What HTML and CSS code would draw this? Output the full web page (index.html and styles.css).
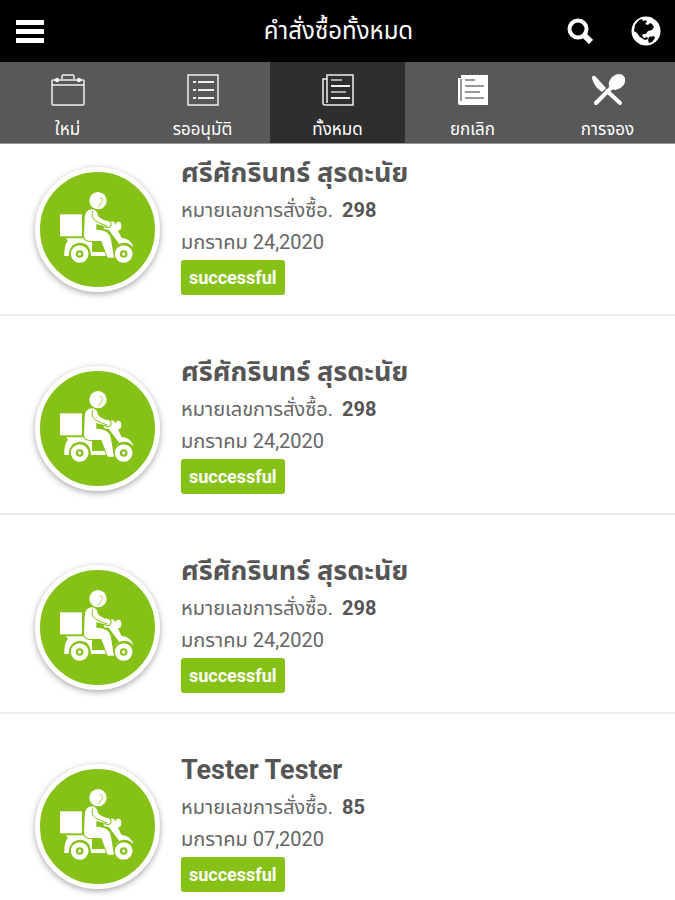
FILE: index.html
```html
<!DOCTYPE html>
<html lang="th">
<head>
    <meta charset="UTF-8">
    <meta name="viewport" content="width=device-width, initial-scale=1.0">
    <title>คำสั่งซื้อทั้งหมด</title>
    <link rel="stylesheet" href="styles.css">
</head>
<body>
    <!-- Shared icons -->
    <svg class="sprite" aria-hidden="true">
        <symbol id="scooter" viewBox="60 63 345 345">
            <circle cx="234" cy="149" r="26" fill="#fff"/>
            <path d="M238 140q10 0 10 8q0 8-7 10q0 8-8 11" fill="none" stroke="#86c117" stroke-width="2"/>
            <rect x="120" y="190" width="66" height="66" fill="#fff"/>
            <path d="M138 262H216V303H280Q284 287 298 279L266 236Q252 238 250 230Q262 226 272 213Q278 208 284 216L304 260Q332 262 341 290Q328 274 311 275Q281 278 278 315H213Q212 276 179 275Q148 278 146 315H133Q132 280 144 270Z" fill="#fff"/>
            <path d="M194 204q0-28 22-29q15 0 18 20q10 12 32 16q8 3 5 12q-1 6-8 5l-34-9v17q24 1 34 10q8 7 10 20l9 54h-19l-19-50h-34q-18 0-18-17z" fill="#fff" stroke="#86c117" stroke-width="6" paint-order="stroke"/>
            <path d="M218 181q-6 20 10 30q12 7 34 14" fill="none" stroke="#86c117" stroke-width="3"/>
            <ellipse cx="295" cy="225" rx="9" ry="13" fill="#fff"/>
            <circle cx="179" cy="309" r="19" fill="#86c117" stroke="#fff" stroke-width="15"/>
            <circle cx="311" cy="309" r="19" fill="#86c117" stroke="#fff" stroke-width="15"/>
            <circle cx="179" cy="309" r="5" fill="#fff"/>
            <circle cx="311" cy="309" r="5" fill="#fff"/>
            <path d="M149 309a30 30 0 0 1 60 0M281 309a30 30 0 0 1 56-14" fill="none" stroke="#86c117" stroke-width="3"/>
        </symbol>
    </svg>

    <header class="topbar">
        <button class="icon-btn" type="button" aria-label="เมนู">
            <svg width="28" height="26" viewBox="0 0 28 26" fill="#fff">
                <rect y="2" width="28" height="5"/>
                <rect y="11" width="28" height="5"/>
                <rect y="20" width="28" height="5"/>
            </svg>
        </button>
        <h1>คำสั่งซื้อทั้งหมด</h1>
        <div class="actions">
            <button class="icon-btn" type="button" aria-label="ค้นหา">
                <svg width="26" height="26" viewBox="0 0 26 26" fill="none" stroke="#fff">
                    <circle cx="11" cy="11" r="8.5" stroke-width="4"/>
                    <path d="M17 17l7 7" stroke-width="6"/>
                </svg>
            </button>
            <button class="icon-btn" type="button" aria-label="ภาษา">
                <svg width="30" height="30" viewBox="0 0 30 30">
                    <circle cx="15" cy="15" r="14.5" fill="#fff"/>
                    <path d="M4 9l4-5 3-1 1 2 3-1 1 2-2 2 3 1 2-2 2 1 2 3-2 3-4 1-2 3h-3l-1 2 2 2 3-1 1 2-3 1-5-3-3-4-3-2z" fill="#000"/>
                    <path d="M17 24l1-3 5-1 1 2-3 4-3 1z" fill="#000"/>
                </svg>
            </button>
        </div>
    </header>

    <nav class="tabs">
        <a href="#new">
            <svg viewBox="0 0 34 34" fill="none" stroke="#eee" stroke-width="1.5">
                <rect x="1" y="7" width="32" height="25" rx="1"/>
                <path d="M1 12h32M11 6V3q0-1 1-1h10q1 0 1 1v3"/>
                <circle cx="6" cy="7" r="1.5" fill="#fff"/>
                <circle cx="28" cy="7" r="1.5" fill="#fff"/>
            </svg>
            <span>ใหม่</span>
        </a>
        <a href="#pending">
            <svg viewBox="0 0 34 34" fill="none" stroke="#eee" stroke-width="1.5">
                <rect x="2" y="2" width="30" height="30"/>
                <path d="M12 9h16M12 17h16M12 25h16M7 9h3M7 17h3M7 25h3" stroke-width="2"/>
            </svg>
            <span>รออนุมัติ</span>
        </a>
        <a href="#all" class="active">
            <svg viewBox="0 0 34 34" fill="none" stroke="#eee" stroke-width="1.5">
                <path d="M6 2h26v30H4q-2 0-2-2V6h4zM6 6v24"/>
                <path d="M10 13h19M10 25h19" stroke-width="2"/>
                <path d="M10 7h11M10 19h15" stroke="#aaa" stroke-width="2"/>
            </svg>
            <span>ทั้งหมด</span>
        </a>
        <a href="#cancel">
            <svg viewBox="0 0 34 34">
                <path d="M5 2h27v30H4q-2 0-2-2V5h3z" fill="#fff"/>
                <path d="M5 6v22M9 7h10M9 13h19M9 19h15M9 25h19" stroke="#777" stroke-width="1.5"/>
            </svg>
            <span>ยกเลิก</span>
        </a>
        <a href="#booking">
            <svg viewBox="0 0 34 34" fill="#fff">
                <path d="M1 5q0-3 3-2l11 12-4 4q-8-5-10-14z"/>
                <ellipse cx="26" cy="9" rx="9" ry="7" transform="rotate(-40 26 9)"/>
                <path d="M21 14L5 30M16 18l13 12" stroke="#fff" stroke-width="4" stroke-linecap="round"/>
            </svg>
            <span>การจอง</span>
        </a>
    </nav>

    <main class="orders">
        <article class="order">
            <div class="avatar"><svg><use href="#scooter"/></svg></div>
            <div class="info">
                <h2>ศรีศักรินทร์ สุรดะนัย</h2>
                <p>หมายเลขการสั่งซื้อ. <b>298</b></p>
                <p>มกราคม 24,2020</p>
                <span class="status">successful</span>
            </div>
        </article>
        <article class="order">
            <div class="avatar"><svg><use href="#scooter"/></svg></div>
            <div class="info">
                <h2>ศรีศักรินทร์ สุรดะนัย</h2>
                <p>หมายเลขการสั่งซื้อ. <b>298</b></p>
                <p>มกราคม 24,2020</p>
                <span class="status">successful</span>
            </div>
        </article>
        <article class="order">
            <div class="avatar"><svg><use href="#scooter"/></svg></div>
            <div class="info">
                <h2>ศรีศักรินทร์ สุรดะนัย</h2>
                <p>หมายเลขการสั่งซื้อ. <b>298</b></p>
                <p>มกราคม 24,2020</p>
                <span class="status">successful</span>
            </div>
        </article>
        <article class="order">
            <div class="avatar"><svg><use href="#scooter"/></svg></div>
            <div class="info">
                <h2>Tester Tester</h2>
                <p>หมายเลขการสั่งซื้อ. <b>85</b></p>
                <p>มกราคม 07,2020</p>
                <span class="status">successful</span>
            </div>
        </article>
    </main>
</body>
</html>
```
FILE: styles.css
```css
* {
    box-sizing: border-box;
}
body {
    margin: 0;
    background-color: #fff;
    color: #555;
    font-family: Roboto, "Noto Sans Thai", "Noto Sans", sans-serif;
}
h1, h2, p {
    margin: 0;
}
.sprite {
    display: none;
}
.topbar {
    display: grid;
    grid-template-columns: 1fr auto 1fr;
    align-items: center;
    height: 62px;
    padding: 0 14px 0 16px;
    background-color: #000;
    color: #fff;
}
.topbar h1 {
    font-size: 24px;
    font-weight: 400;
    line-height: 40px;
}
.icon-btn {
    display: flex;
    align-items: center;
    justify-self: start;
    padding: 0;
    border: 0;
    background: none;
    cursor: pointer;
}
.actions {
    display: flex;
    align-items: center;
    justify-content: flex-end;
    gap: 38px;
}
.tabs {
    display: grid;
    grid-template-columns: repeat(5, 1fr);
    height: 82px;
    border-bottom: 1px solid #999;
    background-color: #585858;
}
.tabs a {
    display: flex;
    flex-direction: column;
    align-items: center;
    gap: 8px;
    padding-top: 11px;
    color: #fff;
    font-size: 17px;
    line-height: 28px;
    text-decoration: none;
}
.tabs a.active {
    background-color: #2e2e2e;
}
.tabs svg {
    width: 34px;
    height: 34px;
}
.order {
    display: flex;
    align-items: flex-start;
    gap: 21px;
    padding: 40px 35px 19px;
    border-bottom: 2px solid #ececec;
}
.order:first-child {
    padding-top: 13px;
}
.order:last-child {
    padding-bottom: 6px;
    border-bottom: 0;
}
.avatar {
    flex: none;
    width: 125px;
    height: 125px;
    margin-top: 10px;
    border: 5px solid #fff;
    border-radius: 50%;
    background-color: #86c117;
    box-shadow: 0 2px 6px rgba(0, 0, 0, 0.35);
}
.avatar svg {
    display: block;
    width: 100%;
    height: 100%;
}
.info h2 {
    margin-bottom: 5px;
    font-size: 27px;
    font-weight: 700;
    line-height: 32px;
}
.info p {
    color: #666;
    font-size: 20px;
    line-height: 32px;
}
.info b {
    margin-left: 4px;
    color: #555;
}
.status {
    display: block;
    width: fit-content;
    margin-top: 2px;
    padding: 0 8px;
    border-radius: 3px;
    background-color: #86c117;
    color: #fff;
    font-size: 18px;
    font-weight: 700;
    line-height: 35px;
}
```
